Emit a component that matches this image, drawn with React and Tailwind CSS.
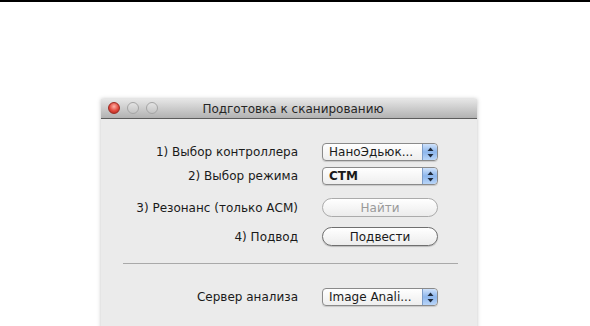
// Окно «Подготовка к сканированию» в стиле Mac OS X
const FONT = { fontFamily: '"DejaVu Sans", "Liberation Sans", sans-serif' };

// синие стрелки вверх/вниз у выпадающего списка
function Stepper() {
  return (
    <div className="w-[15px] h-full rounded-r-[4px] border-l border-[#7d9cc7] bg-gradient-to-b from-[#cfe2fb] via-[#8db6ec] to-[#b9d5f8] flex items-center justify-center">
      <svg width="7" height="11" viewBox="0 0 7 11">
        <path d="M3.5 0.5 L6.5 4 L0.5 4 Z" fill="#1f2b3d" />
        <path d="M3.5 10.5 L6.5 7 L0.5 7 Z" fill="#1f2b3d" />
      </svg>
    </div>
  );
}

function Popup({ value, bold }) {
  return (
    <div className="w-[116px] h-[18px] rounded-[4px] border border-[#8a8a8a] bg-gradient-to-b from-[#ffffff] to-[#eeeeee] flex items-stretch shadow-[0_1px_1px_rgba(0,0,0,0.15)]">
      <span className={"flex-1 pl-[6px] text-[12px] leading-[16px] text-[#1a1a1a] truncate " + (bold ? "font-bold" : "")}>
        {value}
      </span>
      <Stepper />
    </div>
  );
}

function PillButton({ label, disabled }) {
  return (
    <div
      className={
        "w-[116px] h-[19px] rounded-full border bg-gradient-to-b from-[#ffffff] to-[#ececec] flex items-center justify-center text-[12px] " +
        (disabled ? "border-[#ababab] text-[#9a9a9a]" : "border-[#6f6f6f] text-[#1a1a1a] shadow-[0_1px_1px_rgba(0,0,0,0.2)]")
      }
    >
      {label}
    </div>
  );
}

function Row({ label, children, className }) {
  return (
    <div className={"flex items-center " + (className || "")}>
      <div className="w-[197px] text-right text-[12px] text-[#1a1a1a]">{label}</div>
      <div className="ml-[24px]">{children}</div>
    </div>
  );
}

export default function App() {
  return (
    <div className="w-[590px] h-[326px] bg-white overflow-hidden" style={FONT}>
      <div className="h-[2px] bg-black" />

      <div className="ml-[101px] mt-[97px] w-[376px] h-[240px] bg-[#ebebeb] shadow-[0_0_4px_rgba(0,0,0,0.25)]">
        {/* заголовок окна */}
        <div className="relative h-[20px] bg-gradient-to-b from-[#e6e6e6] to-[#b2b2b2] border-b border-[#5c5c5c] flex items-center justify-center">
          <div className="absolute left-[7px] top-[3px] flex gap-[7px]">
            <div className="w-[12px] h-[12px] rounded-full border border-[#9c2a22] bg-[radial-gradient(circle_at_50%_35%,#ffb3a8,#e0463a_55%,#a8231a)]" />
            <div className="w-[12px] h-[12px] rounded-full border border-[#a5a5a5] bg-gradient-to-b from-[#e3e3e3] to-[#c4c4c4]" />
            <div className="w-[12px] h-[12px] rounded-full border border-[#a5a5a5] bg-gradient-to-b from-[#e3e3e3] to-[#c4c4c4]" />
          </div>
          <span className="ml-[8px] text-[12px] text-[#262626]">Подготовка к сканированию</span>
        </div>

        <Row label="1) Выбор контроллера" className="mt-[24px]">
          <Popup value="НаноЭдьюк..." />
        </Row>
        <Row label="2) Выбор режима" className="mt-[6px]">
          <Popup value="СТМ" bold />
        </Row>
        <Row label="3) Резонанс (только АСМ)" className="mt-[13px]">
          <PillButton label="Найти" disabled />
        </Row>
        <Row label="4) Подвод" className="mt-[10px]">
          <PillButton label="Подвести" />
        </Row>

        <div className="mt-[17px] ml-[22px] mr-[19px] h-px bg-[#a9a9a9]" />

        <Row label="Сервер анализа" className="mt-[24px]">
          <Popup value="Image Anali..." />
        </Row>
      </div>
    </div>
  );
}
